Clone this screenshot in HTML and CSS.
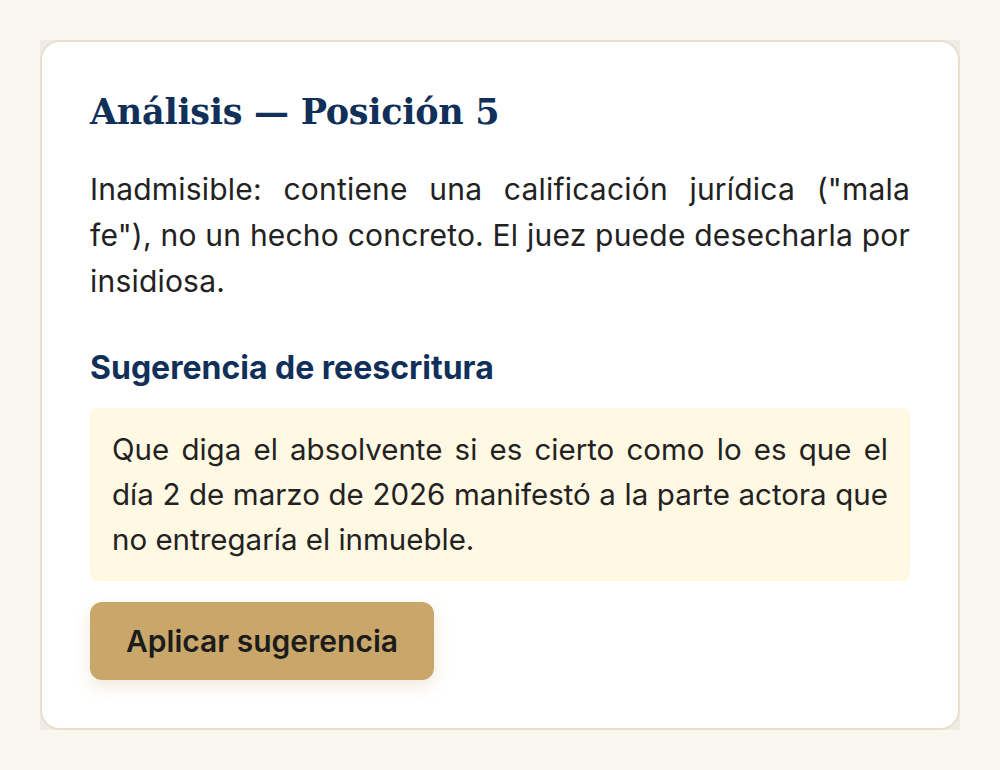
FILE: index.html
```html
<!DOCTYPE html>
<html lang="es">
<head>
<meta charset="utf-8">
<link rel="stylesheet" href="styles.css">
</head>
<body>
<div class="frame">
  <section class="card">
    <h1 class="title">Análisis — Posición 5</h1>
    <p class="analysis">Inadmisible: contiene una calificación jurídica ("mala fe"), no un hecho concreto. El juez puede desecharla por insidiosa.</p>
    <h2 class="subtitle">Sugerencia de reescritura</h2>
    <div class="suggestion">Que diga el absolvente si es cierto como lo es que el día 2 de marzo de 2026 manifestó a la parte actora que no entregaría el inmueble.</div>
    <button class="apply">Aplicar sugerencia</button>
  </section>
</div>
</body>
</html>
```

FILE: styles.css
```css
html, body {
  margin: 0;
  padding: 0;
  background: #faf7f0;
}
body {
  padding: 40px;
  font-family: Inter, "Noto Sans", sans-serif;
}
.frame {
  width: 920px;
  height: 690px;
  background: #efece6;
  overflow: hidden;
}
.card {
  box-sizing: border-box;
  width: 920px;
  height: 690px;
  background: #ffffff;
  border: 2px solid #e8dfcc;
  border-radius: 20px;
  padding: 48px 48px 48px 48px;
  display: flex;
  flex-direction: column;
  align-items: flex-start;
}
.title {
  margin: 0;
  font-family: "DejaVu Serif", "Liberation Serif", serif;
  font-weight: bold;
  font-size: 35px;
  line-height: 44px;
  color: #10305a;
  letter-spacing: -0.3px;
}
.analysis {
  margin: 32px 0 0 0;
  font-size: 30px;
  line-height: 46px;
  color: #222222;
  text-align: justify;
  letter-spacing: 0.2px;
  width: 100%;
}
.subtitle {
  margin: 44px 0 0 0;
  font-size: 32px;
  line-height: 40px;
  font-weight: 700;
  color: #10305a;
}
.suggestion {
  box-sizing: border-box;
  width: 100%;
  margin-top: 20px;
  background: #fff8e3;
  border-radius: 8px;
  padding: 19px 22px;
  font-size: 29.5px;
  line-height: 45px;
  color: #222222;
  text-align: justify;
}
.apply {
  margin-top: 21px;
  background: #c9a76b;
  border: none;
  border-radius: 12px;
  height: 78px;
  padding: 0 36px;
  font-family: Inter, "Noto Sans", sans-serif;
  font-size: 30px;
  font-weight: 600;
  color: #1c1c1c;
  box-shadow: 0 6px 16px rgba(201, 167, 107, 0.25);
}
```
